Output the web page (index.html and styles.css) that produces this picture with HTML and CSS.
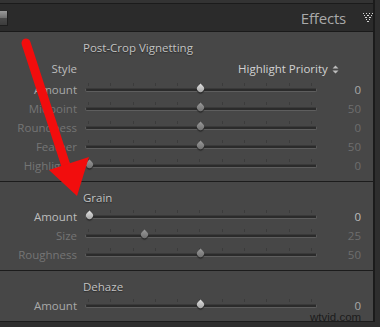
FILE: index.html
```html
<!DOCTYPE html>
<html lang="en">
<head>
  <meta charset="UTF-8">
  <title>Effects</title>
  <link rel="stylesheet" href="styles.css">
</head>
<body>

  <div class="frame">
    <div class="topstrip"></div>

    <div class="header">
      <div class="switch"></div>
      <span class="header-title">Effects</span>
      <svg class="collapse" width="10" height="10" viewBox="0 0 10 10">
        <g fill="#d8d8d8">
          <rect x="0" y="0" width="1" height="1"/><rect x="3" y="0" width="1" height="1"/>
          <rect x="6" y="0" width="1" height="1"/><rect x="9" y="0" width="1" height="1"/>
          <rect x="1" y="2" width="1" height="1"/><rect x="4" y="2" width="2" height="1"/>
          <rect x="8" y="2" width="1" height="1"/>
          <rect x="2" y="4" width="2" height="1"/><rect x="6" y="4" width="2" height="1"/>
          <rect x="3" y="6" width="1" height="1"/><rect x="6" y="6" width="1" height="1"/>
          <rect x="4" y="8" width="2" height="1"/>
        </g>
      </svg>
    </div>

    <div class="panel">
      <div class="section first">
        <div class="section-title">Post-Crop Vignetting</div>
        <div class="row style-row">
          <span class="label bright">Style</span>
          <span class="style-value">Highlight Priority
            <svg class="updown" width="7" height="9" viewBox="0 0 7 9">
              <path d="M0.5 3.5 L3.5 0.5 L6.5 3.5 Z M0.5 5.5 L3.5 8.5 L6.5 5.5 Z" fill="#bdbdbd"/>
            </svg>
          </span>
        </div>
        <div class="row">
          <span class="label mid">Amount</span>
          <div class="track"><span class="thumb" style="left:50%"></span></div>
          <span class="value mid">0</span>
        </div>
        <div class="row dim">
          <span class="label">Midpoint</span>
          <div class="track"><span class="thumb" style="left:50%"></span></div>
          <span class="value">50</span>
        </div>
        <div class="row dim">
          <span class="label">Roundness</span>
          <div class="track"><span class="thumb" style="left:50%"></span></div>
          <span class="value">0</span>
        </div>
        <div class="row dim">
          <span class="label">Feather</span>
          <div class="track"><span class="thumb" style="left:50%"></span></div>
          <span class="value">50</span>
        </div>
        <div class="row dim">
          <span class="label">Highlights</span>
          <div class="track"><span class="thumb" style="left:2%"></span></div>
          <span class="value">0</span>
        </div>
      </div>

      <div class="section">
        <div class="section-title">Grain</div>
        <div class="row">
          <span class="label bright">Amount</span>
          <div class="track"><span class="thumb" style="left:2%"></span></div>
          <span class="value bright">0</span>
        </div>
        <div class="row dim">
          <span class="label">Size</span>
          <div class="track"><span class="thumb" style="left:25.9%"></span></div>
          <span class="value">25</span>
        </div>
        <div class="row dim">
          <span class="label">Roughness</span>
          <div class="track"><span class="thumb" style="left:50%"></span></div>
          <span class="value">50</span>
        </div>
      </div>

      <div class="section last">
        <div class="section-title">Dehaze</div>
        <div class="row">
          <span class="label mid">Amount</span>
          <div class="track"><span class="thumb" style="left:50%"></span></div>
          <span class="value mid">0</span>
        </div>
      </div>
    </div>

    <div class="bottomstrip"></div>

    <span class="watermark">wtvid.com</span>

    <svg class="arrow" width="380" height="327" viewBox="0 0 380 327">
      <line x1="26" y1="43" x2="66" y2="166" stroke="#f20d0d" stroke-width="9" stroke-linecap="round"/>
      <polygon points="77,196 49,170 89,157" fill="#f20d0d"/>
    </svg>
  </div>

</body>
</html>
```

FILE: styles.css
```css
body {
  margin: 0;
  background: #2c2c2c;
  font-family: "Open Sans", "Liberation Sans", sans-serif;
}

.frame {
  position: relative;
  width: 380px;
  height: 327px;
  overflow: hidden;
  background: #2e2e2e;
}

.topstrip {
  height: 3px;
  width: 373px;
  background: #333;
  border-bottom: 1px solid #1b1b1b;
  border-right: 2px solid #1b1b1b;
}

.header {
  display: flex;
  align-items: center;
  height: 27px;
  width: 373px;
  background: #2b2b2b;
  border-right: 2px solid #1b1b1b;
  border-bottom: 1px solid #1a1a1a;
}

.switch {
  width: 7px;
  height: 14px;
  margin-top: 1px;
  background: linear-gradient(#9a9a9a, #6e6e6e 50%, #4a4a4a 51%, #3c3c3c);
  border-right: 1px solid #1e1e1e;
  border-bottom: 1px solid #1e1e1e;
}

.header-title {
  margin-left: auto;
  color: #a9a9a9;
  font-size: 15px;
  letter-spacing: -0.2px;
}

.collapse {
  margin: 1px 0 0 17px;
  width: 10px;
  height: 10px;
}

.panel {
  width: 373px;
  background: #474747;
  border-right: 2px solid #1b1b1b;
}

.section {
  padding: 6px 0 6px;
  border-bottom: 1px solid #1c1c1c;
}

.section.last {
  padding: 7px 0 6px;
}

.section-title {
  height: 19px;
  line-height: 19px;
  padding-left: 83px;
  color: #c2c2c2;
  font-size: 11.5px;
  text-shadow: 0 1px 1px #2a2a2a;
}

.section.last .section-title {
  height: 18px;
  line-height: 18px;
}

.row {
  display: flex;
  align-items: center;
  height: 19px;
  font-size: 11.5px;
}

.first .row.style-row,
.first .style-row + .row {
  margin-top: 2px;
}

.label {
  width: 77px;
  text-align: right;
  color: #757575;
}

.label.bright,
.value.bright {
  color: #bdbdbd;
}

.label.mid,
.value.mid {
  color: #a9a9a9;
}

.style-value {
  margin-left: 161px;
  color: #d2d2d2;
}

.updown {
  margin-left: 1px;
  vertical-align: -1px;
}

.track {
  position: relative;
  margin-left: 8px;
  width: 230px;
  height: 2px;
  margin-top: 1px;
  background: #2b2b2b;
  border: 1px solid #5e5e5e;
  border-top-color: #3a3a3a;
  border-radius: 2px;
}

.track::before {
  content: "";
  position: absolute;
  left: 2px;
  top: -6px;
  width: 224px;
  height: 3px;
  background: repeating-linear-gradient(to right, #3b3b3b 0 1px, transparent 1px 22.3px);
}

.thumb {
  position: absolute;
  top: -4px;
  width: 7px;
  height: 7px;
  margin-left: -4.5px;
  background: linear-gradient(135deg, #e2e2e2, #9c9c9c);
  border-radius: 0 50% 50% 50%;
  transform: rotate(45deg);
  box-shadow: 1px 1px 1px #2a2a2a;
}

.dim .thumb {
  background: linear-gradient(135deg, #9a9a9a, #6a6a6a);
}

.value {
  width: 44px;
  line-height: 12px;
  text-align: right;
  color: #6e6e6e;
}

.bottomstrip {
  height: 5px;
}

.watermark {
  position: absolute;
  left: 310px;
  top: 312px;
  line-height: 11px;
  color: #1c1c1c;
  font-size: 11.5px;
  font-family: "Liberation Sans", sans-serif;
}

.arrow {
  position: absolute;
  left: 0;
  top: 0;
  pointer-events: none;
}
```
